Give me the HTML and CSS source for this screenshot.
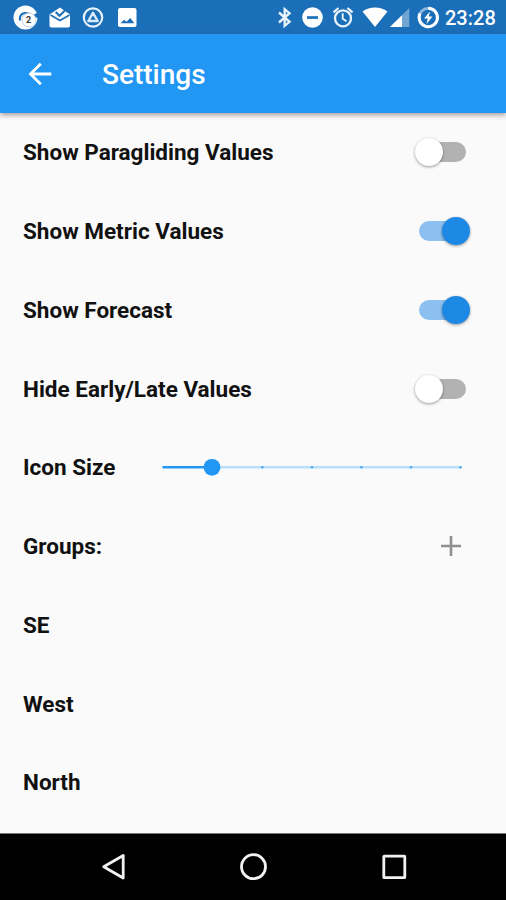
FILE: index.html
```html
<!DOCTYPE html>
<html lang="en">
<head>
<meta charset="utf-8">
<title>Settings</title>
<link rel="stylesheet" href="styles.css">
</head>
<body>
<div class="screen">
  <header class="status">
    <svg class="status-icons" width="140" height="34" viewBox="0 0 140 34">
      <circle cx="25.500" cy="17.500" r="12" fill="#fff"/>
      <path d="M31.800 15.800l7-3.800v6.500z" fill="#1a6fb8"/>
      <path d="M20 20.500c-1-4.500 1.500-7.500 5.500-7.500 2 0 3.500.6 4.500 1.500" fill="none" stroke="#1a6fb8" stroke-width="2.200"/>
      <circle cx="29" cy="20" r="7" fill="#fff" stroke="#a9c4da" stroke-width=".8"/>
      <text x="28.700" y="23" class="badge-count">2</text>
      <path d="M49.500 14.500L60 7.500l10 7V25.500a2 2 0 0 1-2 2H51.500a2 2 0 0 1-2-2z" fill="#fff"/>
      <path d="M50.500 15l9.500 5.500 9.500-5.500" fill="none" stroke="#1a6fb8" stroke-width="1.600"/>
      <path d="M55.700 12l3.800 3.800L67 8.500" fill="none" stroke="#1a6fb8" stroke-width="2"/>
      <circle cx="93" cy="17.500" r="9.200" fill="none" stroke="#e8f3fc" stroke-width="2.200"/>
      <path d="M93 12.800l4.700 8.200h-9.400z" fill="none" stroke="#d9eafa" stroke-width="2.400" stroke-linejoin="round"/>
      <rect x="118" y="8" width="18.500" height="19" rx="2" fill="#fff"/>
      <path d="M120.500 23.300l3.500-3.500 2.500 2 3.800-3.800 4 5.300z" fill="#1a6fb8"/>
    </svg>
    <div class="status-end">
      <svg width="168" height="34" viewBox="272 0 168 34">
        <path d="M279 12.500l10.500 9.300-4.800 4V9.200l4.800 4-10.500 9.300" fill="none" stroke="#e8f3fc" stroke-width="2.400"/>
        <circle cx="312.500" cy="17.500" r="10.300" fill="#fff"/>
        <rect x="307" y="16.200" width="11" height="2.700" fill="#1a6fb8"/>
        <circle cx="343" cy="18.300" r="8" fill="none" stroke="#e8f3fc" stroke-width="2.300"/>
        <path d="M333.500 12.300l5-4.300M352.500 12.300l-5-4.300" stroke="#e8f3fc" stroke-width="2.300"/>
        <path d="M342.700 13.300v5.500l3.800 2.500" fill="none" stroke="#e8f3fc" stroke-width="1.900"/>
        <path d="M362.500 11.500c7-5.500 18-5.500 25 0L375 27z" fill="#fff"/>
        <path d="M409.300 8v19H390z" fill="#71a6d3"/>
        <path d="M402 15.200V27H390z" fill="#fff"/>
        <circle cx="428.300" cy="17.500" r="9.200" fill="none" stroke="#8db9df" stroke-width="2.800"/>
        <path d="M428.300 8.300A9.200 9.200 0 1 1 420 13.500" fill="none" stroke="#fff" stroke-width="2.900"/>
        <path d="M430 11.500l-6 7h3.700l-1.200 5.500 6-7.500h-3.700z" fill="#fff"/>
      </svg>
      <span class="clock">23:28</span>
    </div>
  </header>

  <div class="appbar">
    <svg width="24" height="24" viewBox="0 0 24 24"><path d="M23.300 12H2.500M12.800 1.700L2.500 12l10.300 10.300" fill="none" stroke="#fff" stroke-width="2.800"/></svg>
    <h1>Settings</h1>
  </div>

  <main class="list">
    <div class="row"><span>Show Paragliding Values</span><i class="switch"></i></div>
    <div class="row"><span>Show Metric Values</span><i class="switch on"></i></div>
    <div class="row"><span>Show Forecast</span><i class="switch on"></i></div>
    <div class="row"><span>Hide Early/Late Values</span><i class="switch"></i></div>
    <div class="row"><span>Icon Size</span>
      <svg class="slider" width="302" height="20" viewBox="161 0 302 20">
        <path d="M212 10.300H461" stroke="#b9dffb" stroke-width="2.400"/>
        <path d="M162.500 10.300H212" stroke="#2196f3" stroke-width="2.600"/>
        <g fill="#4da9f2"><circle cx="262.300" cy="10.300" r="1.300"/><circle cx="312" cy="10.300" r="1.300"/><circle cx="361.500" cy="10.300" r="1.300"/><circle cx="411" cy="10.300" r="1.300"/><circle cx="460.500" cy="10.300" r="1.300"/></g>
        <circle cx="212" cy="10.300" r="8.400" fill="#2196f3"/>
      </svg>
    </div>
    <div class="row"><span>Groups:</span>
      <svg class="plus" width="20" height="20" viewBox="0 0 20 20"><path d="M0 10h20M10 0v20" stroke="#8f8f8f" stroke-width="2.600"/></svg>
    </div>
    <div class="row"><span>SE</span></div>
    <div class="row"><span>West</span></div>
    <div class="row"><span>North</span></div>
  </main>

  <nav class="navbar">
    <svg width="506" height="66" viewBox="0 834 506 66" fill="none" stroke="#f2f2f2" stroke-width="2.800">
      <path d="M123.200 855.500v22.500l-19.500-11.300z" stroke-linejoin="round"/>
      <circle cx="253.500" cy="866.700" r="12"/>
      <rect x="383.800" y="856.200" width="21" height="21.500" rx=".5"/>
    </svg>
  </nav>
</div>
</body>
</html>
```
FILE: styles.css
```css
body {
  margin: 0;
  font-family: Roboto, "Liberation Sans", sans-serif;
}

.screen {
  display: flex;
  flex-direction: column;
  width: 506px;
  height: 900px;
  overflow: hidden;
  background: #fafafa;
}

.status {
  display: flex;
  justify-content: space-between;
  flex: none;
  height: 34px;
  background: #1a6fb8;
}

.status-end {
  display: flex;
  align-items: center;
}

.status svg,
.navbar svg {
  display: block;
}

.badge-count {
  font-size: 9px;
  font-weight: 700;
  fill: #333;
  text-anchor: middle;
}

.clock {
  width: 61px;
  margin-left: 5px;
  font-size: 20px;
  font-weight: 500;
  line-height: 34px;
  color: #fff;
  padding-top: 2px;
}

.appbar {
  display: flex;
  align-items: center;
  flex: none;
  gap: 50px;
  box-sizing: border-box;
  height: 79px;
  padding-left: 28px;
  background: #2196f3;
  box-shadow: 0 2px 5px rgba(60, 40, 30, 0.45);
  z-index: 1;
}

.appbar h1 {
  margin: 2px 0 0;
  font-size: 28px;
  font-weight: 500;
  color: #fff;
}

.list {
  flex: 1;
}

.row {
  display: flex;
  align-items: center;
  justify-content: space-between;
  height: 78.75px;
  padding: 0 40px 0 23px;
  font-size: 22.5px;
  font-weight: 700;
  color: #111;
}

.switch {
  position: relative;
  width: 47px;
  height: 20px;
  border-radius: 10px;
  background: #b2b2b2;
}

.switch::after {
  content: "";
  position: absolute;
  top: -4px;
  left: -4px;
  width: 28px;
  height: 28px;
  border-radius: 50%;
  background: #fff;
  box-shadow: 0 1px 3px rgba(0, 0, 0, 0.4);
}

.switch.on {
  background: #8bc0f0;
}

.switch.on::after {
  left: 23px;
  background: #1e88e5;
}

.slider {
  margin-right: 3px;
}

.plus {
  margin-right: 5.5px;
}

.navbar {
  flex: none;
  height: 67px;
  background: #000;
  border-top: 1px solid #777;
  box-sizing: border-box;
}
```
